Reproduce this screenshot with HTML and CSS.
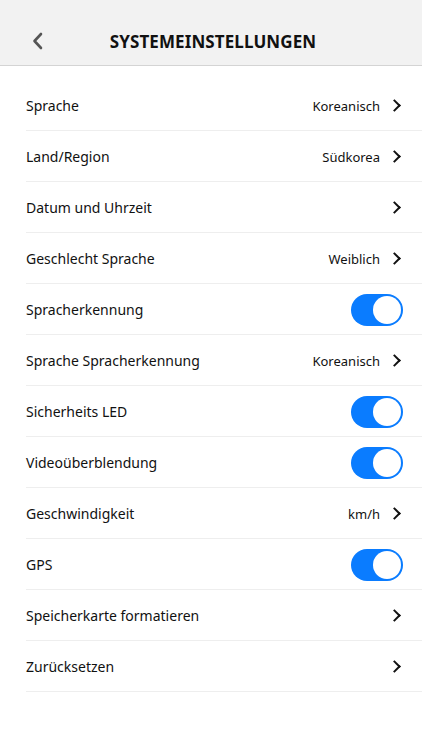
FILE: index.html
```html
<!DOCTYPE html>
<html lang="de">
<head>
    <meta charset="UTF-8">
    <meta name="viewport" content="width=device-width, initial-scale=1.0">
    <title>Systemeinstellungen</title>
    <link rel="stylesheet" href="styles.css">
</head>
<body>
    <header class="top-bar">
        <button class="back-btn" aria-label="Zurück">
            <svg width="14" height="18" viewBox="0 0 14 18"><path d="M10 2 L3.5 9 L10 16" fill="none" stroke="#555" stroke-width="2.6" stroke-linecap="round" stroke-linejoin="round"/></svg>
        </button>
        <h1 class="title">SYSTEMEINSTELLUNGEN</h1>
    </header>

    <ul class="settings">
        <li class="row"><span class="label">Sprache</span><span class="value">Koreanisch</span><span class="chev"></span></li>
        <li class="row"><span class="label">Land/Region</span><span class="value">Südkorea</span><span class="chev"></span></li>
        <li class="row"><span class="label">Datum und Uhrzeit</span><span class="chev"></span></li>
        <li class="row"><span class="label">Geschlecht Sprache</span><span class="value">Weiblich</span><span class="chev"></span></li>
        <li class="row"><span class="label">Spracherkennung</span><span class="toggle on"></span></li>
        <li class="row"><span class="label">Sprache Spracherkennung</span><span class="value">Koreanisch</span><span class="chev"></span></li>
        <li class="row"><span class="label">Sicherheits LED</span><span class="toggle on"></span></li>
        <li class="row"><span class="label">Videoüberblendung</span><span class="toggle on"></span></li>
        <li class="row"><span class="label">Geschwindigkeit</span><span class="value">km/h</span><span class="chev"></span></li>
        <li class="row"><span class="label">GPS</span><span class="toggle on"></span></li>
        <li class="row"><span class="label">Speicherkarte formatieren</span><span class="chev"></span></li>
        <li class="row"><span class="label">Zurücksetzen</span><span class="chev"></span></li>
    </ul>
</body>
</html>
```

FILE: styles.css
```css
:root {
    --blue: #0a7cff;
    --line: #eeeeee;
    --text: #111111;
    --bar-bg: #f2f2f2;
}

* {
    margin: 0;
    padding: 0;
    box-sizing: border-box;
}

body {
    background: #ffffff;
    color: var(--text);
    font-family: "Noto Sans", "Open Sans", sans-serif;
}

.top-bar {
    height: 66px;
    background: var(--bar-bg);
    border-bottom: 1px solid #d4d4d4;
    position: relative;
    display: flex;
    align-items: flex-end;
    justify-content: center;
    padding-bottom: 13px;
}

.back-btn {
    position: absolute;
    left: 31px;
    bottom: 15px;
    border: none;
    background: none;
    width: 14px;
    height: 18px;
    display: flex;
}

.title {
    font-size: 17px;
    font-weight: 700;
    letter-spacing: 0.1px;
    line-height: 20px;
    margin-left: 4px;
}

.settings {
    list-style: none;
    padding-top: 14px;
}

.row {
    margin-left: 26px;
    height: 51px;
    border-bottom: 1px solid var(--line);
    display: flex;
    align-items: center;
    padding-right: 19px;
    font-size: 14px;
    padding-top: 1px;
}

.label {
    flex: 1;
}

.value {
    font-size: 13px;
    margin-right: 9px;
}

.chev {
    width: 14px;
    height: 14px;
    display: flex;
    justify-content: flex-end;
    align-items: center;
    padding-right: 2px;
}

.chev::before {
    content: "";
    width: 7px;
    height: 7px;
    border-top: 2.4px solid #111;
    border-right: 2.4px solid #111;
    transform: rotate(45deg);
    margin-right: 2px;
}

.toggle {
    width: 52px;
    height: 32px;
    border-radius: 16px;
    background: var(--blue);
    position: relative;
}

.toggle::after {
    content: "";
    position: absolute;
    top: 2px;
    right: 2px;
    width: 28px;
    height: 28px;
    border-radius: 50%;
    background: #fff;
}
```
